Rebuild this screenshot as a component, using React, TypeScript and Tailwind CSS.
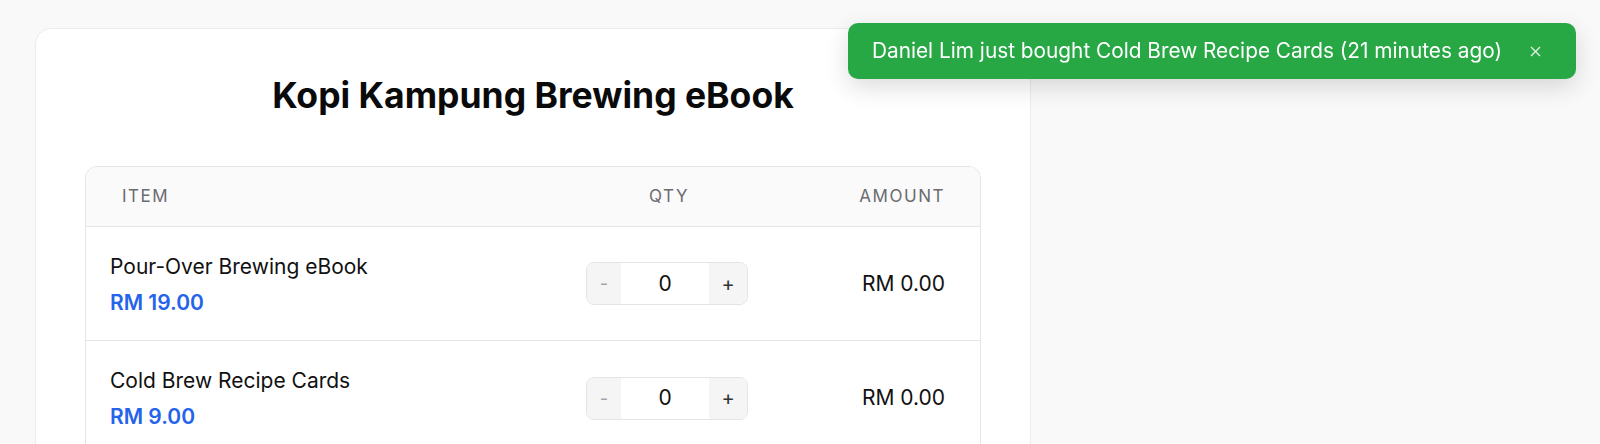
import { useState } from 'react';

type Product = {
  id: number;
  name: string;
  price: number;
};

const products: Product[] = [
  { id: 1, name: 'Pour-Over Brewing eBook', price: 19 },
  { id: 2, name: 'Cold Brew Recipe Cards', price: 9 },
];

const formatRM = (n: number) => `RM ${n.toFixed(2)}`;

const QtyStepper = ({ value, onChange }: { value: number; onChange: (v: number) => void }) => (
  <div className="flex h-[43px] w-[162px] overflow-hidden rounded-[8px] border border-[#e4e4e7]">
    <button
      type="button"
      onClick={() => onChange(Math.max(0, value - 1))}
      className="flex w-[34px] items-center justify-center bg-[#f5f5f5] text-[18px] text-[#a1a1aa]"
    >
      -
    </button>
    <div className="flex flex-1 items-center justify-center bg-white text-[21px] text-[#111]">{value}</div>
    <button
      type="button"
      onClick={() => onChange(value + 1)}
      className="flex w-[38px] items-center justify-center bg-[#f5f5f5] text-[20px] text-[#333]"
    >
      +
    </button>
  </div>
);

export default function App() {
  const [qty, setQty] = useState<Record<number, number>>({ 1: 0, 2: 0 });
  const [toastOpen, setToastOpen] = useState(true);

  return (
    <div
      className="h-screen overflow-hidden bg-[#f9f9f9] pl-[35px] pt-[28px]"
      style={{ fontFamily: 'Inter, "Noto Sans", sans-serif' }}
    >
      <div className="w-[996px] rounded-[16px] border border-[#ececec] bg-white px-[49px] pb-[48px] pt-[45px]">
        <h1 className="text-center text-[35.5px] font-bold leading-[43px] text-[#0a0a0a]">
          Kopi Kampung Brewing eBook
        </h1>

        <div className="mt-[49px] overflow-hidden rounded-[12px] border border-[#e5e5e5]">
          <div className="flex h-[60px] items-center border-b border-[#e5e5e5] bg-[#fafafa] pl-[36px] pr-[35px] text-[17px] tracking-[0.09em] text-[#6b6b70]">
            <div className="flex-1">ITEM</div>
            <div className="w-[162px] text-center">QTY</div>
            <div className="w-[195px] text-right">AMOUNT</div>
          </div>

          {products.map((p) => (
            <div key={p.id} className="flex h-[114px] items-center border-b border-[#e5e5e5] pl-[24px] pr-[35px] last:border-b-0">
              <div className="flex flex-1 flex-col gap-[8px] pt-[2px]">
                <div className="text-[21px] leading-[28px] text-[#111]">{p.name}</div>
                <div className="text-[21px] font-semibold leading-[28px] text-[#2563eb]">{formatRM(p.price)}</div>
              </div>
              <div className="w-[162px]">
                <QtyStepper value={qty[p.id] ?? 0} onChange={(v) => setQty({ ...qty, [p.id]: v })} />
              </div>
              <div className="w-[197px] text-right text-[21px] text-[#111]">
                {formatRM(p.price * (qty[p.id] ?? 0))}
              </div>
            </div>
          ))}
        </div>
      </div>

      {toastOpen && (
        <div className="fixed right-[24px] top-[23px] flex h-[56px] items-center gap-[28px] rounded-[10px] bg-[#28a745] pl-[24px] pr-[35px] text-[20.8px] text-white shadow-[0_8px_24px_rgba(0,0,0,0.14)]">
          <span>Daniel Lim just bought Cold Brew Recipe Cards (21 minutes ago)</span>
          <button type="button" onClick={() => setToastOpen(false)} className="text-white/85">
            <svg width="11" height="11" viewBox="0 0 11 11" fill="none" stroke="currentColor" strokeWidth="1.4">
              <path d="M1 1L10 10M10 1L1 10" />
            </svg>
          </button>
        </div>
      )}
    </div>
  );
}
